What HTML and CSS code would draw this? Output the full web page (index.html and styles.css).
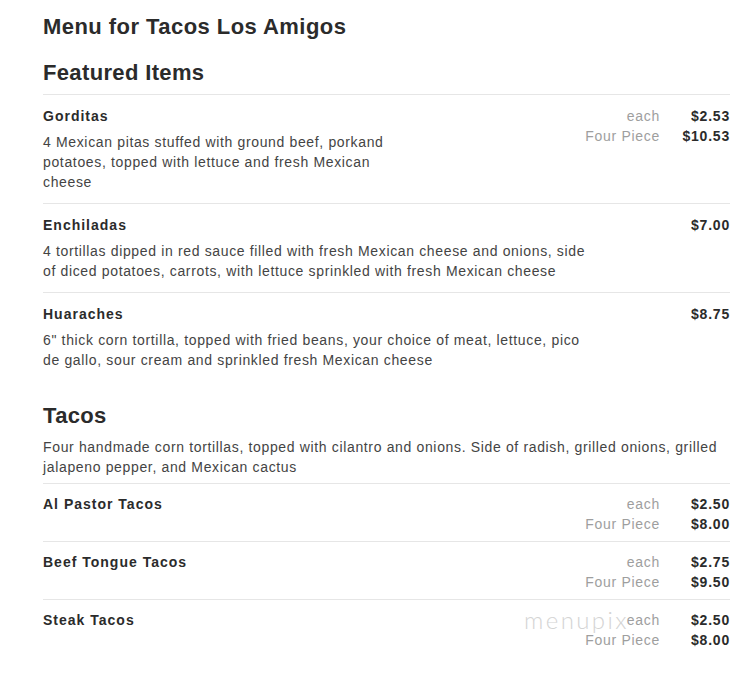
FILE: index.html
```html
<!DOCTYPE html>
<html lang="en">
<head>
<meta charset="utf-8">
<title>Menu for Tacos Los Amigos</title>
<link rel="stylesheet" href="styles.css">
</head>
<body>
<div class="page">
  <h1 class="title">Menu for Tacos Los Amigos</h1>

  <section class="section">
    <h2 class="section-title">Featured Items</h2>

    <div class="item">
      <div class="info">
        <div class="name">Gorditas</div>
        <div class="desc desc-narrow">4 Mexican pitas stuffed with ground beef, porkand potatoes, topped with lettuce and fresh Mexican cheese</div>
      </div>
      <div class="prices">
        <span class="label">each</span><span class="price">$2.53</span>
        <span class="label">Four Piece</span><span class="price">$10.53</span>
      </div>
    </div>

    <div class="item">
      <div class="info">
        <div class="name">Enchiladas</div>
        <div class="desc">4 tortillas dipped in red sauce filled with fresh Mexican cheese and onions, side of diced potatoes, carrots, with lettuce sprinkled with fresh Mexican cheese</div>
      </div>
      <div class="prices">
        <span class="label"></span><span class="price">$7.00</span>
      </div>
    </div>

    <div class="item">
      <div class="info">
        <div class="name">Huaraches</div>
        <div class="desc">6" thick corn tortilla, topped with fried beans, your choice of meat, lettuce, pico de gallo, sour cream and sprinkled fresh Mexican cheese</div>
      </div>
      <div class="prices">
        <span class="label"></span><span class="price">$8.75</span>
      </div>
    </div>
  </section>

  <section class="section section-tacos">
    <h2 class="section-title">Tacos</h2>
    <p class="section-desc">Four handmade corn tortillas, topped with cilantro and onions. Side of radish, grilled onions, grilled jalapeno pepper, and Mexican cactus</p>

    <div class="item item-compact">
      <div class="info">
        <div class="name">Al Pastor Tacos</div>
      </div>
      <div class="prices">
        <span class="label">each</span><span class="price">$2.50</span>
        <span class="label">Four Piece</span><span class="price">$8.00</span>
      </div>
    </div>

    <div class="item item-compact">
      <div class="info">
        <div class="name">Beef Tongue Tacos</div>
      </div>
      <div class="prices">
        <span class="label">each</span><span class="price">$2.75</span>
        <span class="label">Four Piece</span><span class="price">$9.50</span>
      </div>
    </div>

    <div class="item item-compact">
      <div class="info">
        <div class="name">Steak Tacos</div>
      </div>
      <div class="prices">
        <span class="label">each</span><span class="price">$2.50</span>
        <span class="label">Four Piece</span><span class="price">$8.00</span>
      </div>
      <span class="watermark">menupix</span>
    </div>
  </section>
</div>
</body>
</html>
```

FILE: styles.css
```css
html, body {
  margin: 0;
  padding: 0;
  background: #ffffff;
}

body {
  font-family: "Liberation Sans", Arial, sans-serif;
  color: #333333;
}

.page {
  width: 687px;
  padding: 12px 0 0 43px;
}

.title {
  margin: 0;
  font-size: 22px;
  line-height: 30px;
  font-weight: bold;
  letter-spacing: 0.45px;
  color: #2b2b2b;
}

.section {
  margin-top: 16px;
}

.section-tacos {
  margin-top: 20px;
}

.section-title {
  margin: 0 0 6px 0;
  font-size: 22px;
  line-height: 30px;
  font-weight: bold;
  letter-spacing: 0.35px;
  color: #2b2b2b;
}

.section-desc {
  margin: 0 0 6px 0;
  font-size: 14px;
  line-height: 20px;
  letter-spacing: 0.65px;
  color: #444444;
}

.item {
  position: relative;
  display: flex;
  justify-content: space-between;
  align-items: flex-start;
  border-top: 1px solid #e6e6e6;
  padding: 11px 0 11px 0;
}

.item-compact {
  padding: 10px 0 7px 0;
}

.info {
  flex: 1 1 auto;
}

.name {
  font-size: 14px;
  line-height: 20px;
  font-weight: bold;
  letter-spacing: 1px;
  color: #2b2b2b;
}

.desc {
  margin-top: 6px;
  width: 548px;
  font-size: 14px;
  line-height: 20px;
  letter-spacing: 0.65px;
  color: #444444;
}

.desc-narrow {
  width: 350px;
}

.prices {
  display: grid;
  grid-template-columns: auto 70px;
  font-size: 14px;
  line-height: 20px;
  flex: 0 0 auto;
}

.label {
  text-align: right;
  color: #9e9e9e;
  letter-spacing: 0.7px;
}

.price {
  text-align: right;
  font-weight: bold;
  letter-spacing: 0.8px;
  color: #2b2b2b;
}

.watermark {
  position: absolute;
  left: 481px;
  top: 5px;
  font-family: "Lato", "Liberation Sans", sans-serif;
  font-weight: 300;
  font-size: 24px;
  line-height: 30px;
  color: #d4d4d4;
  letter-spacing: 2.4px;
  pointer-events: none;
}
```
